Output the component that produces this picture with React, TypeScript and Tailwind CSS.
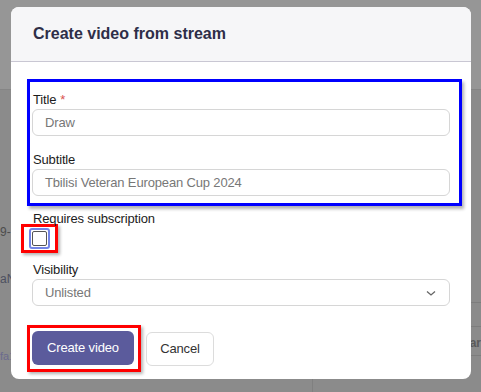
const font = "font-['Liberation_Sans',Arial,sans-serif]";
const text = "text-[13px] tracking-[-0.15px]";

function Field({
  label,
  value,
  required,
  className = "",
}: {
  label: string;
  value: string;
  required?: boolean;
  className?: string;
}) {
  return (
    <div className={className}>
      <div className={`pl-px leading-[18px] text-[#1c1c1c] ${text}`}>
        {label}
        {required && <span className="ml-1 text-[#d9534f]">*</span>}
      </div>
      <div className={`flex h-[27px] items-center rounded-md border border-[#d6d6d6] px-3 text-[#777] ${text}`}>
        {value}
      </div>
    </div>
  );
}

export default function App() {
  return (
    <div className={`relative h-[392px] w-[481px] overflow-hidden bg-[#8b8b8b] ${font}`}>
      {/* page behind the overlay */}
      <div className="flex h-full flex-col">
        <div className="h-[90px] border-b border-[#858585] bg-[#969696]" />
        <div className="flex flex-1">
          <div className="flex w-[315px] flex-col border-r border-[#808080] pt-[134px] text-[12px] leading-4 text-[#4d4d4d]">
            <span>9-</span>
            <span className="mt-[31px] text-[#4d5060]">aN</span>
            <span className="mt-[61px] text-[11px] text-[#6a6a8e]">fa1</span>
          </div>
          <div className="flex flex-1 flex-col pt-[212px]">
            <div className="h-px bg-[#7d7d7d]" />
            <div className="mt-[23px] h-px bg-[#7d7d7d]" />
            <div className="pl-[150px] pt-[7px] text-[12px] font-bold text-[#5a5a5a]">ear</div>
            <div className="mt-[3px] h-px bg-[#7d7d7d]" />
          </div>
        </div>
      </div>

      {/* dialog */}
      <div className="absolute left-[11px] top-[7px] w-[460px] rounded-lg bg-white">
        <div className="flex h-[55px] items-center rounded-t-lg border-b border-[#c9c7d3] bg-[#f6f6f8] pl-[22px]">
          <h2 className="text-[16px] font-bold text-[#2e2e48]">Create video from stream</h2>
        </div>

        <div className="px-[21px] pb-[7px] pt-[17px]">
          <div className="-ml-[5px] -mr-[12px] border-[3px] border-[#0000ff] pb-[7px] pl-[2px] pr-[9px] pt-[9px] shadow-[2px_3px_3px_rgba(0,0,0,0.3)]">
            <Field label="Title" value="Draw" required />
            <Field label="Subtitle" value="Tbilisi Veteran European Cup 2024" className="mt-[15px]" />
          </div>

          <div className={`mt-[5px] pl-px leading-4 text-[#1c1c1c] ${text}`}>Requires subscription</div>
          <div className="-ml-[11px] mt-[-3px] flex w-fit border-[3px] border-[#ff0000] px-[5px] py-px shadow-[2px_2px_3px_rgba(0,0,0,0.3)]">
            <div className="flex h-[21px] w-[21px] items-center justify-center rounded-[3px] border-2 border-[#7284e6] bg-white">
              <div className="h-[15px] w-[15px] rounded-[2px] border-[1.5px] border-[#555]" />
            </div>
          </div>

          <div className={`mt-[7px] pl-px leading-[19px] text-[#1c1c1c] ${text}`}>Visibility</div>
          <div className={`flex h-[27px] items-center justify-between rounded-md border border-[#d6d6d6] pl-3 pr-[12px] text-[#777] ${text}`}>
            <span>Unlisted</span>
            <svg width="12" height="12" viewBox="0 0 12 12" fill="none" stroke="#666" strokeWidth="1.3">
              <path d="M2 4.5l4 3.5 4-3.5" />
            </svg>
          </div>

          <div className="mt-[19px] flex items-center gap-[5px]">
            <div className="-ml-[5px] border-[3px] border-[#ff0000] pb-[4px] pl-[2px] pr-[4px] pt-[3px] shadow-[2px_2px_3px_rgba(0,0,0,0.3)]">
              <button className={`flex h-[34px] w-[102px] items-center justify-center rounded-md bg-[#5b5b9c] text-white ${text}`}>
                Create video
              </button>
            </div>
            <button className={`flex h-[34px] w-[68px] items-center justify-center rounded-md border border-[#dcdcdc] bg-white text-[#333] ${text}`}>
              Cancel
            </button>
          </div>
        </div>
      </div>
    </div>
  );
}
